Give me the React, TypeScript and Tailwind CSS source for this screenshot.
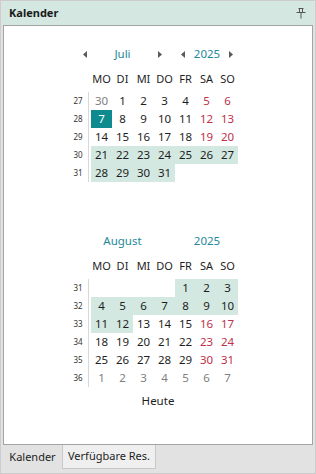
import React from 'react';

type Day = { d: number; other?: boolean; red?: boolean; hl?: boolean; sel?: boolean };

const font = { fontFamily: '"Noto Sans", "Open Sans", sans-serif' };

const july: { wk: number | null; days: Day[] }[] = [
    {
        wk: 27,
        days: [
            { d: 30, other: true },
            { d: 1 },
            { d: 2 },
            { d: 3 },
            { d: 4 },
            { d: 5, red: true },
            { d: 6, red: true },
        ],
    },
    {
        wk: 28,
        days: [
            { d: 7, sel: true },
            { d: 8 },
            { d: 9 },
            { d: 10 },
            { d: 11 },
            { d: 12, red: true },
            { d: 13, red: true },
        ],
    },
    {
        wk: 29,
        days: [
            { d: 14 },
            { d: 15 },
            { d: 16 },
            { d: 17 },
            { d: 18 },
            { d: 19, red: true },
            { d: 20, red: true },
        ],
    },
    {
        wk: 30,
        days: [21, 22, 23, 24, 25, 26, 27].map((d) => ({ d, hl: true })),
    },
    {
        wk: 31,
        days: [28, 29, 30, 31].map((d) => ({ d, hl: true })),
    },
    { wk: null, days: [] },
];

const august: { wk: number | null; days: (Day | null)[] }[] = [
    {
        wk: 31,
        days: [null, null, null, null, { d: 1, hl: true }, { d: 2, hl: true }, { d: 3, hl: true }],
    },
    {
        wk: 32,
        days: [4, 5, 6, 7, 8, 9, 10].map((d) => ({ d, hl: true })),
    },
    {
        wk: 33,
        days: [
            { d: 11, hl: true },
            { d: 12, hl: true },
            { d: 13 },
            { d: 14 },
            { d: 15 },
            { d: 16, red: true },
            { d: 17, red: true },
        ],
    },
    {
        wk: 34,
        days: [
            { d: 18 },
            { d: 19 },
            { d: 20 },
            { d: 21 },
            { d: 22 },
            { d: 23, red: true },
            { d: 24, red: true },
        ],
    },
    {
        wk: 35,
        days: [
            { d: 25 },
            { d: 26 },
            { d: 27 },
            { d: 28 },
            { d: 29 },
            { d: 30, red: true },
            { d: 31, red: true },
        ],
    },
    {
        wk: 36,
        days: [1, 2, 3, 4, 5, 6, 7].map((d) => ({ d, other: true })),
    },
];

const dayNames = ['MO', 'DI', 'MI', 'DO', 'FR', 'SA', 'SO'];

function Arrow({ dir, hidden }: { dir: 'l' | 'r'; hidden?: boolean }) {
    return (
        <div className="flex h-[18px] w-[10px] items-center justify-center">
            {!hidden && (
                <svg width="4" height="7" viewBox="0 0 4 7">
                    {dir === 'l' ? (
                        <path d="M4 0 L0 3.5 L4 7 Z" fill="#5a5a5a" />
                    ) : (
                        <path d="M0 0 L4 3.5 L0 7 Z" fill="#5a5a5a" />
                    )}
                </svg>
            )}
        </div>
    );
}

function Cell({ day }: { day: Day | null }) {
    if (!day) return <div className="h-[18px] w-[21px]" />;
    let cls = 'text-[#1e1e1e]';
    if (day.other) cls = 'text-[#808080]';
    if (day.red) cls = 'text-[#c0304a]';
    let bg = '';
    if (day.hl) bg = 'bg-[#d4e8e2]';
    if (day.sel) {
        bg = 'bg-[#0e8b8e]';
        cls = 'text-white';
    }
    return (
        <div className={`flex h-[18px] w-[21px] items-center justify-center text-[11.5px] ${bg} ${cls}`}>
            {day.d}
        </div>
    );
}

function Month({
    name,
    arrows,
    rows,
}: {
    name: string;
    arrows: boolean;
    rows: { wk: number | null; days: (Day | null)[] }[];
}) {
    return (
        <div className="flex flex-col">
            {/* nav */}
            <div className="ml-[76px] flex h-[18px] items-center text-[11.5px] text-[#23899a]">
                <Arrow dir="l" hidden={!arrows} />
                <div className="w-[65px] text-center">{name}</div>
                <Arrow dir="r" hidden={!arrows} />
                <div className="w-[13px]" />
                <Arrow dir="l" hidden={!arrows} />
                <div className="w-[38px] text-center">2025</div>
                <Arrow dir="r" hidden={!arrows} />
            </div>

            {/* weekday header */}
            <div className="ml-[87px] mt-[7px] flex h-[18px] items-center text-[11px] text-[#1e1e1e]">
                {dayNames.map((n) => (
                    <div key={n} className="w-[21px] text-center">
                        {n}
                    </div>
                ))}
            </div>

            {/* weeks */}
            <div className="mt-[4px] ml-[64px] flex flex-col">
                {rows.map((r, i) => (
                    <div key={i} className="flex h-[18px]">
                        <div
                            className={`flex w-[21px] items-center justify-center text-[8px] text-[#333] ${
                                r.wk !== null ? 'border-r border-[#d8d8d8]' : ''
                            }`}
                        >
                            {r.wk}
                        </div>
                        <div className="ml-[2px] flex">
                            {r.days.map((d, j) => (
                                <Cell key={j} day={d} />
                            ))}
                        </div>
                    </div>
                ))}
            </div>
        </div>
    );
}

export default function App() {
    return (
        <div
            className="flex h-[474px] w-[316px] flex-col border border-[#cdcdcd] bg-[#e2e2e2]"
            style={font}
        >
            {/* Header */}
            <div className="mx-[1px] flex h-[24px] items-center justify-between bg-[#d4e8e1] pl-[7px] pr-[8px]">
                <span className="text-[11px] font-bold text-[#1a1a1a]">Kalender</span>
                <svg width="10" height="11" viewBox="0 0 10 11">
                    <path
                        d="M2.5 0.5 H7.5 M3.5 0.5 V4.5 M6.5 0.5 V4.5 M0.5 4.5 H9.5 M5 4.5 V10.5"
                        stroke="#555"
                        strokeWidth="1"
                        fill="none"
                    />
                </svg>
            </div>

            {/* Content */}
            <div className="mx-[2px] flex h-[420px] flex-col border border-[#a3a3a3] bg-white">
                <div className="mt-[19px]">
                    <Month name="Juli" arrows rows={july} />
                </div>
                <div className="mt-[32px]">
                    <Month name="August" arrows={false} rows={august} />
                </div>
                <div className="mt-[5px] flex h-[18px] items-center justify-center text-[11.5px] text-[#1e1e1e]">
                    Heute
                </div>
            </div>

            {/* Tabs */}
            <div className="ml-[2px] flex h-[24px] text-[11px] text-[#1e1e1e]">
                <div className="flex w-[60px] items-center justify-center border-r border-[#c8c8c8] bg-[#e2e2e2]">
                    Kalender
                </div>
                <div className="flex w-[93px] items-center justify-center border border-l-0 border-t-0 border-[#c8c8c8] bg-[#efefef]">
                    Verfügbare Res.
                </div>
            </div>
        </div>
    );
}
